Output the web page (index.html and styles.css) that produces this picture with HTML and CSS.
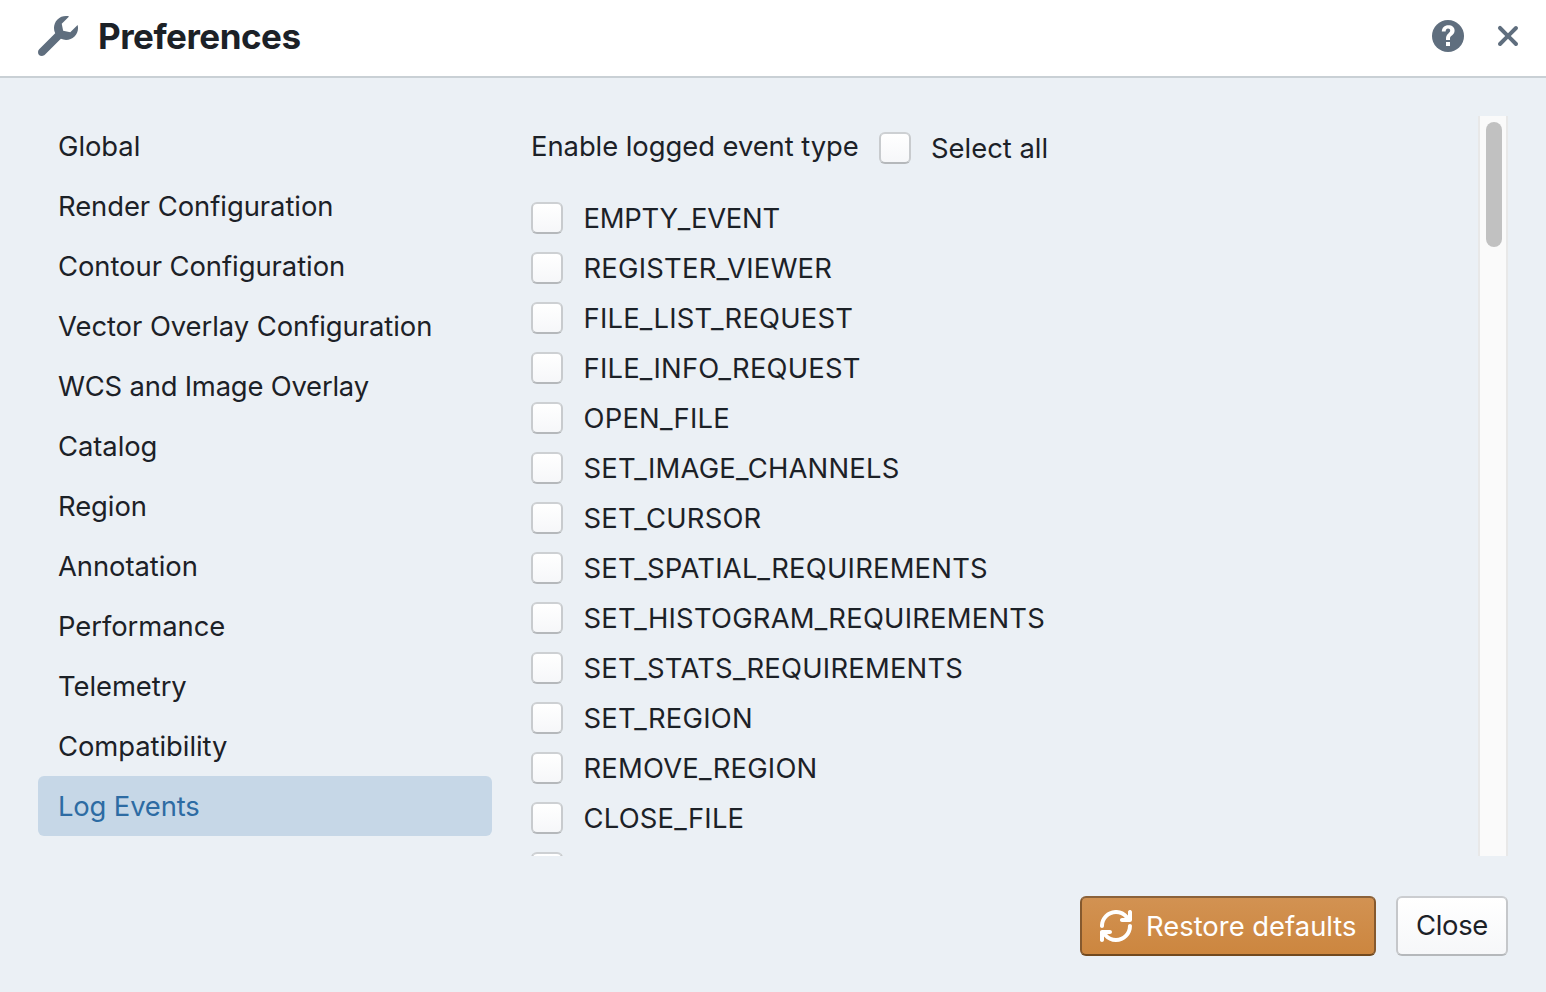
FILE: index.html
```html
<!DOCTYPE html>
<html lang="en">
<head>
<meta charset="utf-8">
<title>Preferences</title>
<link rel="stylesheet" href="styles.css">
</head>
<body>
<div class="dialog">
  <header class="header">
    <svg class="icon-wrench" viewBox="0 0 20 20"><path d="M19.8 4.44L16.13 8.1l-3.55-.71-.71-3.53L15.54.21c-2.01-.53-4.23-.03-5.8 1.53-1.86 1.85-2.23 4.6-1.14 6.83L.59 16.59C.22 16.95 0 17.45 0 18a2 2 0 002 2c.55 0 1.05-.22 1.41-.59l8.03-8.04c2.23 1.05 4.97.67 6.82-1.16 1.57-1.56 2.07-3.77 1.54-5.77z"/></svg>
    <h1 class="title"><span>Preferences</span></h1>
    <svg class="icon-help" viewBox="0 0 16 16"><circle cx="8" cy="8" r="8"/><path class="mark" d="M7 11h2v2H7zM4.9 5.8C5 3.8 6.2 2.6 8.2 2.6c1.9 0 3.1 1 3.1 2.6 0 1.1-.5 1.8-1.2 2.4C9.3 8.2 9 8.5 9 9.1v.9H7v-.8c0-1.2.4-1.8 1.2-2.5.6-.5.9-.8.9-1.4s-.4-1-1.1-1c-.7 0-1.1.5-1.2 1.5z"/></svg>
    <svg class="icon-close" viewBox="0 0 20 20"><path d="M11.41 10l3.29-3.29c.19-.18.3-.43.3-.71a1.003 1.003 0 00-1.71-.71L10 8.59l-3.29-3.3a1.003 1.003 0 00-1.42 1.42L8.59 10 5.3 13.29c-.19.18-.3.43-.3.71a1.003 1.003 0 001.71.71l3.29-3.3 3.29 3.29c.18.19.43.3.71.3a1.003 1.003 0 00.71-1.71L11.41 10z"/></svg>
  </header>
  <main class="body">
    <nav class="tabs">
      <div class="tab"><span>Global</span></div>
      <div class="tab"><span>Render Configuration</span></div>
      <div class="tab"><span>Contour Configuration</span></div>
      <div class="tab"><span>Vector Overlay Configuration</span></div>
      <div class="tab tight"><span>WCS and Image Overlay</span></div>
      <div class="tab"><span>Catalog</span></div>
      <div class="tab"><span>Region</span></div>
      <div class="tab"><span>Annotation</span></div>
      <div class="tab"><span>Performance</span></div>
      <div class="tab"><span>Telemetry</span></div>
      <div class="tab"><span>Compatibility</span></div>
      <div class="tab selected"><span>Log Events</span></div>
    </nav>
    <section class="panel">
      <div class="list">
        <div class="heading"><span class="heading-label">Enable logged event type</span><i class="box"></i><span class="select-all">Select all</span></div>
        <div class="event tight"><i class="box"></i><span>EMPTY_EVENT</span></div>
        <div class="event"><i class="box"></i><span>REGISTER_VIEWER</span></div>
        <div class="event"><i class="box"></i><span>FILE_LIST_REQUEST</span></div>
        <div class="event"><i class="box"></i><span>FILE_INFO_REQUEST</span></div>
        <div class="event"><i class="box"></i><span>OPEN_FILE</span></div>
        <div class="event"><i class="box"></i><span>SET_IMAGE_CHANNELS</span></div>
        <div class="event"><i class="box"></i><span>SET_CURSOR</span></div>
        <div class="event"><i class="box"></i><span>SET_SPATIAL_REQUIREMENTS</span></div>
        <div class="event"><i class="box"></i><span>SET_HISTOGRAM_REQUIREMENTS</span></div>
        <div class="event"><i class="box"></i><span>SET_STATS_REQUIREMENTS</span></div>
        <div class="event"><i class="box"></i><span>SET_REGION</span></div>
        <div class="event"><i class="box"></i><span>REMOVE_REGION</span></div>
        <div class="event"><i class="box"></i><span>CLOSE_FILE</span></div>
        <div class="event"><i class="box"></i></div>
      </div>
      <div class="track"><div class="thumb"></div></div>
    </section>
  </main>
  <footer class="footer">
    <button class="btn warning"><svg class="icon-refresh" viewBox="0 0 16 16"><path d="M14.99 6.99c-.55 0-1 .45-1 1 0 3.31-2.69 6-6 6-1.77 0-3.36-.78-4.46-2h1.46c.55 0 1-.45 1-1s-.45-1-1-1h-4c-.55 0-1 .45-1 1v4c0 .55.45 1 1 1s1-.45 1-1v-1.74a7.95 7.95 0 006 2.74c4.42 0 8-3.58 8-8 0-.55-.45-1-1-1zm0-7c-.55 0-1 .45-1 1v1.74a7.95 7.95 0 00-6-2.74c-4.42 0-8 3.58-8 8 0 .55.45 1 1 1s1-.45 1-1c0-3.31 2.69-6 6-6 1.77 0 3.36.78 4.46 2h-1.46c-.55 0-1 .45-1 1s.45 1 1 1h4c.55 0 1-.45 1-1v-4c0-.55-.45-1-1-1z"/></svg><span>Restore defaults</span></button>
    <button class="btn plain"><span>Close</span></button>
  </footer>
</div>
</body>
</html>
```
FILE: styles.css
```css
* { box-sizing: border-box; }
body {
  margin: 0;
  font-family: Inter, "Liberation Sans", sans-serif;
  font-size: 27.4px;
  color: #1c2127;
  background: #ebf0f5;
}
svg { display: block; flex: none; fill: #5f6e7e; }
.dialog { height: 992px; display: flex; flex-direction: column; overflow: hidden; }
.header {
  height: 78px;
  flex: none;
  display: flex;
  align-items: center;
  padding: 0 18px 4px 38px;
  background: #fff;
  border-bottom: 2px solid #c9d0d5;
}
.icon-wrench { width: 40px; height: 40px; margin-right: 20px; }
.title { flex: 1; margin: 0; font-size: 35px; font-weight: 650; line-height: 40px; letter-spacing: -0.5px; }
.icon-help { width: 32px; height: 32px; margin-right: 24px; }
.icon-help .mark { fill: #fff; }
.icon-close { width: 40px; height: 40px; }
.body { display: flex; padding: 38px 38px 0; height: 778px; flex: none; }
.tabs { width: 454px; flex: none; margin-right: 39px; }
.tab { height: 60px; line-height: 60px; padding-left: 20px; border-radius: 6px; white-space: nowrap; letter-spacing: -0.05px; }
.tab.tight { letter-spacing: -0.2px; }
.selected { background: #c6d7e7; color: #2d6ba3; letter-spacing: -0.15px; }
.panel { flex: 1; display: flex; justify-content: space-between; overflow: hidden; }
.list { padding-top: 16px; height: 740px; overflow: hidden; }
.heading { display: flex; height: 33px; margin-bottom: 37px; white-space: nowrap; line-height: 32px; }
.heading-label { width: 348px; margin-top: -2px; letter-spacing: -0.05px; }
.select-all { margin-left: 20px; }
.event { display: flex; height: 50px; line-height: 32px; gap: 20.5px; white-space: nowrap; letter-spacing: 0.22px; }
.event.tight { letter-spacing: -0.25px; }
.box {
  width: 32px;
  height: 32px;
  flex: none;
  border: 2px solid;
  border-color: #cdd0d3 #c8cbce #b5b8bb;
  border-radius: 6px;
  background: linear-gradient(#fff, #f6f7f9);
}
.track { width: 30px; height: 740px; border: solid #e8e8e8; border-width: 0 2px; background: #fafafa; padding: 6px 0 0 6px; }
.thumb { width: 16px; height: 125px; border-radius: 8px; background: #c1c1c1; }
.footer { display: flex; justify-content: flex-end; gap: 20px; padding: 40px 38px 0; }
.btn {
  height: 60px;
  display: flex;
  align-items: center;
  padding: 0 18px;
  border: 2px solid;
  border-radius: 6px;
  font: inherit;
  white-space: nowrap;
}
.warning {
  width: 296px;
  gap: 14px;
  color: #fff;
  border-color: #8b623a #85592e #71491f;
  background: linear-gradient(#d29252, #cc863f);
}
.icon-refresh { width: 32px; height: 32px; fill: #fff; }
.plain { width: 112px; padding-bottom: 2px; letter-spacing: -0.3px; color: #1c2127; border-color: #cbcdd0 #c5c7ca #b5b8bb; background: linear-gradient(#fff, #f6f7f9); }
```
